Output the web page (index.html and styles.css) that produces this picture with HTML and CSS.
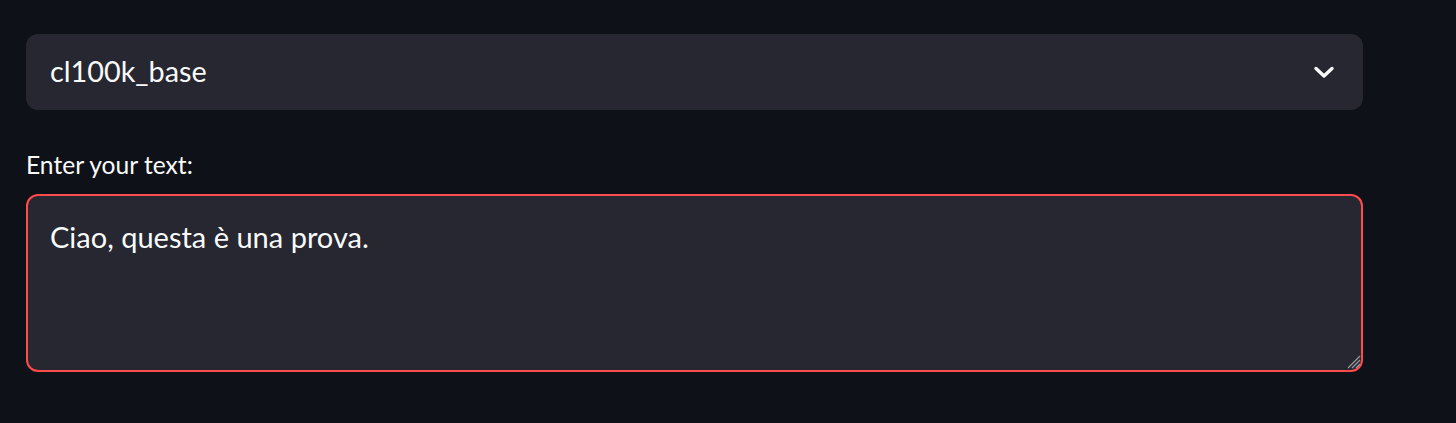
FILE: index.html
```html
<!DOCTYPE html>
<html lang="it">
<head>
<meta charset="utf-8">
<title>Tokenizer</title>
<link rel="stylesheet" href="styles.css">
</head>
<body>
<main class="app">
  <div class="select">
    <span class="select-value">cl100k_base</span>
    <svg class="chevron" width="22" height="14" viewBox="0 0 22 14" aria-hidden="true">
      <path d="M3 3.5 L11 11 L19 3.5" fill="none" stroke="#fafafa" stroke-width="3.4" stroke-linecap="round" stroke-linejoin="round"/>
    </svg>
  </div>
  <label class="field-label" for="txt">Enter your text:</label>
  <div class="textarea-wrap">
    <textarea id="txt" class="textarea">Ciao, questa è una prova.</textarea>
    <svg class="grip" width="16" height="16" viewBox="0 0 16 16" aria-hidden="true">
      <path d="M15 3 L3 15 M15 7 L7 15 M15 11 L11 15" stroke="#9a9aa0" stroke-width="1.2" fill="none"/>
    </svg>
  </div>
</main>
</body>
</html>
```
FILE: styles.css
```css
html, body {
  margin: 0;
  padding: 0;
  background: #0e1117;
}
body {
  font-family: "Lato", "Noto Sans", sans-serif;
  color: #fafafa;
}
.app {
  width: 1337px;
  padding: 34px 0 0 26px;
  display: flex;
  flex-direction: column;
}
.select {
  height: 76px;
  box-sizing: border-box;
  background: #262730;
  border-radius: 12px;
  display: flex;
  align-items: center;
  justify-content: space-between;
  padding: 0 28px 0 24px;
}
.select-value {
  font-size: 28.8px;
  line-height: 1;
  margin-top: -1px;
}
.chevron {
  display: block;
}
.field-label {
  margin-top: 40px;
  font-size: 24.6px;
  line-height: 30px;
  height: 30px;
  margin-bottom: 14px;
}
.textarea-wrap {
  position: relative;
  height: 178px;
}
.textarea {
  display: block;
  width: 100%;
  height: 178px;
  box-sizing: border-box;
  background: #262730;
  color: #fafafa;
  border: 2px solid #ff4b4b;
  border-radius: 12px;
  padding: 21px 22px;
  font-family: inherit;
  font-size: 29px;
  line-height: 1.4;
  resize: none;
  outline: none;
  margin: 0;
}
.grip {
  position: absolute;
  right: 2px;
  bottom: 3px;
  display: block;
}
```
